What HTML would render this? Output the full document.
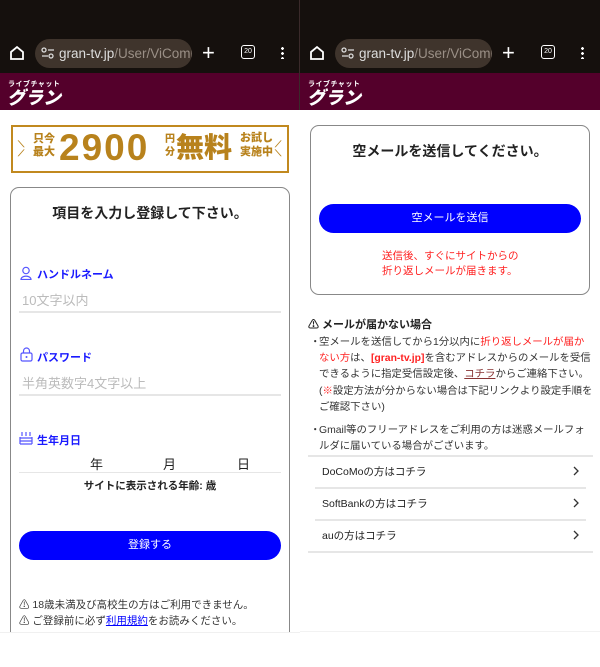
<!DOCTYPE html>
<html><head><meta charset="utf-8"><style>
*{box-sizing:border-box;margin:0;padding:0}
body{width:600px;height:667px;background:#fff;font-family:"Liberation Sans","Noto Sans CJK JP",sans-serif;position:relative;overflow:hidden;color:#222}
.p{position:absolute;top:0;width:300px;height:667px;overflow:hidden}
.top{position:absolute;left:0;top:0;width:300px;height:73px;background:#15100d}
.url{position:absolute;left:35px;top:39px;width:157px;height:29px;border-radius:15px;background:#3f342c;color:#ddd;font-size:13.5px;line-height:29px;padding-left:24px;white-space:nowrap;overflow:hidden}
.url span{color:#9a8f86}
.band{position:absolute;left:0;top:73px;width:300px;height:37px;background:#54002b}
.logo1{position:absolute;left:8px;top:79px;color:#fff;font-size:7px;font-weight:bold;letter-spacing:0.5px}
.logo2{position:absolute;left:7px;top:84px;color:#fff;font-size:18px;font-weight:900;font-style:italic}
.abs{position:absolute}
.lbl{color:#1a1aff;font-size:11px;font-weight:bold}
.ph{color:#bbb;font-size:13px}
.ln{position:absolute;height:2px;background:#e6e6e6}
.btn{position:absolute;background:#0000ff;color:#fff;border-radius:15px;text-align:center;font-size:11px;line-height:29px}
.bl{position:absolute;left:10px;font-size:10.4px;line-height:16.2px;color:#333;white-space:nowrap}
.bl i{font-style:normal;display:inline-block;width:9px}
</style></head><body>
<div class="p" style="left:0">
<div class="top"></div>
<svg class="abs" style="left:8px;top:44px" width="18" height="18" viewBox="0 0 18 18"><path d="M3 8L9 3L15 8V15H3Z" fill="none" stroke="#fff" stroke-width="1.8"/></svg>
<div class="url">gran-tv.jp<span>/User/ViComm</span></div>
<svg class="abs" style="left:41px;top:47px" width="14" height="12"><circle cx="3" cy="3" r="2" fill="none" stroke="#ddd" stroke-width="1.3"/><path d="M7 3H13M1 9H7" stroke="#ddd" stroke-width="1.3"/><circle cx="10" cy="9" r="2" fill="none" stroke="#ddd" stroke-width="1.3"/></svg>
<div class="abs" style="left:202px;top:42px;color:#fff;font-size:22px;line-height:22px">+</div>
<div class="abs" style="left:241px;top:45px;width:14px;height:14px;border:1.5px solid #fff;border-radius:3px;color:#fff;font-size:7px;text-align:center;line-height:11px">20</div>
<div class="abs" style="left:281px;top:46px;width:3px;height:13px;background:radial-gradient(circle,#fff 1.3px,transparent 1.5px) 0 0/3px 5px"></div>
<div class="band"></div>
<div class="logo1">ライブチャット</div><div class="logo2">グラン</div>
<div class="abs" style="left:11px;top:125px;width:278px;height:48px;border:2px solid #c1891f;color:#b8821c;font-weight:900">
<div class="abs" style="left:20px;top:6px;font-size:11px;line-height:13px">只今<br>最大</div>
<div class="abs" style="left:46px;top:1px;font-size:37px;line-height:40px;letter-spacing:2px">2900</div>
<div class="abs" style="left:152px;top:6px;font-size:10px;line-height:13px">円<br>分</div>
<div class="abs" style="left:163px;top:5px;font-size:28px;line-height:32px">無料</div>
<div class="abs" style="left:227px;top:4px;font-size:11px;line-height:14px">お試し<br>実施中</div>
<div class="abs" style="left:5px;top:13px;font-size:9px;line-height:9px">⟍<br>⟋</div><div class="abs" style="left:262px;top:13px;font-size:9px;line-height:9px">⟋<br>⟍</div>
</div>
<div class="abs" style="left:10px;top:187px;width:280px;height:460px;border:1.5px solid #888;border-radius:9px"></div>
<div class="abs" style="left:0;width:300px;top:203px;text-align:center;font-size:14px;font-weight:bold">項目を入力し登録して下さい。</div>
<svg class="abs" style="left:20px;top:266px" width="12" height="14"><circle cx="6" cy="4.5" r="3.2" fill="none" stroke="#55f" stroke-width="1.2"/><path d="M1 13.5C1 9 11 9 11 13.5Z" fill="none" stroke="#55f" stroke-width="1.2"/></svg>
<div class="abs lbl" style="left:37px;top:266px">ハンドルネーム</div>
<div class="abs ph" style="left:22px;top:290px">10文字以内</div>
<div class="ln" style="left:19px;top:311px;width:262px"></div>
<svg class="abs" style="left:20px;top:347px" width="13" height="15"><path d="M3.5 6V4A3 3 0 0 1 9.5 4V6" fill="none" stroke="#55f" stroke-width="1.2"/><rect x="1" y="6" width="11" height="8" rx="1.5" fill="none" stroke="#55f" stroke-width="1.2"/><circle cx="6.5" cy="10" r="1" fill="#55f"/></svg>
<div class="abs lbl" style="left:37px;top:349px">パスワード</div>
<div class="abs ph" style="left:22px;top:373px">半角英数字4文字以上</div>
<div class="ln" style="left:19px;top:394px;width:262px"></div>
<svg class="abs" style="left:19px;top:431px" width="14" height="14"><path d="M3 1V5M7 1V5M11 1V5M1 7H13M1 10H13M1 13H13" stroke="#55f" stroke-width="1.2"/><path d="M1 6V13M13 6V13" stroke="#55f" stroke-width="1.2"/></svg>
<div class="abs lbl" style="left:37px;top:432px">生年月日</div>
<div class="abs" style="left:90px;top:454px;font-size:13px">年</div>
<div class="abs" style="left:163px;top:454px;font-size:13px">月</div>
<div class="abs" style="left:237px;top:454px;font-size:13px">日</div>
<div class="ln" style="left:19px;top:472px;width:262px;height:1px"></div>
<div class="abs" style="left:0;width:300px;top:478px;text-align:center;font-size:10.5px;font-weight:bold">サイトに表示される年齢: 歳</div>
<div class="btn" style="left:19px;top:531px;width:262px">登録する</div>
<div class="abs" style="left:19px;top:597px;font-size:10.5px;line-height:16px;color:#333">⚠ 18歳未満及び高校生の方はご利用できません。<br>⚠ ご登録前に必ず<u style="color:#00f">利用規約</u>をお読みください。</div>
<div class="abs" style="left:0;top:632px;width:300px;height:35px;background:#fff;border-top:1px solid #f0f0f0"></div>
</div>
<div class="abs" style="left:299px;top:0;width:1px;height:110px;background:#3a2a2a"></div>
<div class="p" style="left:300px">
<div class="top"></div>
<svg class="abs" style="left:8px;top:44px" width="18" height="18" viewBox="0 0 18 18"><path d="M3 8L9 3L15 8V15H3Z" fill="none" stroke="#fff" stroke-width="1.8"/></svg>
<div class="url">gran-tv.jp<span>/User/ViComm</span></div>
<svg class="abs" style="left:41px;top:47px" width="14" height="12"><circle cx="3" cy="3" r="2" fill="none" stroke="#ddd" stroke-width="1.3"/><path d="M7 3H13M1 9H7" stroke="#ddd" stroke-width="1.3"/><circle cx="10" cy="9" r="2" fill="none" stroke="#ddd" stroke-width="1.3"/></svg>
<div class="abs" style="left:202px;top:42px;color:#fff;font-size:22px;line-height:22px">+</div>
<div class="abs" style="left:241px;top:45px;width:14px;height:14px;border:1.5px solid #fff;border-radius:3px;color:#fff;font-size:7px;text-align:center;line-height:11px">20</div>
<div class="abs" style="left:281px;top:46px;width:3px;height:13px;background:radial-gradient(circle,#fff 1.3px,transparent 1.5px) 0 0/3px 5px"></div>
<div class="band"></div>
<div class="logo1">ライブチャット</div><div class="logo2">グラン</div>
<div class="abs" style="left:10px;top:125px;width:280px;height:170px;border:1.5px solid #888;border-radius:9px"></div>
<div class="abs" style="left:0;width:300px;top:141px;text-align:center;font-size:14px;font-weight:bold">空メールを送信してください。</div>
<div class="btn" style="left:19px;top:204px;width:262px">空メールを送信</div>
<div class="abs" style="left:82px;top:249px;font-size:10.5px;line-height:15px;color:#f22">送信後、すぐにサイトからの<br>折り返しメールが届きます。</div>
<div class="abs" style="left:8px;top:316px;font-size:11px;font-weight:bold">⚠ メールが届かない場合</div>
<div class="bl" style="top:335px"><i>・</i>空メールを送信してから1分以内に<span style="color:#f22">折り返しメールが届か</span><br><i></i><span style="color:#f22">ない方</span>は、<b style="color:#f22">[gran-tv.jp]</b>を含むアドレスからのメールを受信<br><i></i>できるように指定受信設定後、<u style="color:#833">コチラ</u>からご連絡下さい。<br><i></i>(<span style="color:#f22">※</span>設定方法が分からない場合は下記リンクより設定手順を<br><i></i>ご確認下さい)</div>
<div class="bl" style="top:423px"><i>・</i>Gmail等のフリーアドレスをご利用の方は迷惑メールフォ<br><i></i>ルダに届いている場合がございます。</div>
<div class="ln" style="left:8px;top:455px;width:285px"></div>
<div class="abs" style="left:22px;top:464px;font-size:10.5px">DoCoMoの方はコチラ</div>
<div class="ln" style="left:15px;top:487px;width:271px"></div>
<div class="abs" style="left:22px;top:496px;font-size:10.5px">SoftBankの方はコチラ</div>
<div class="ln" style="left:15px;top:519px;width:271px"></div>
<div class="abs" style="left:22px;top:528px;font-size:10.5px">auの方はコチラ</div>
<div class="ln" style="left:8px;top:551px;width:285px"></div>
<svg class="abs" style="left:272px;top:466px" width="8" height="80"><path d="M2 1L6 5L2 9M2 33L6 37L2 41M2 65L6 69L2 73" fill="none" stroke="#333" stroke-width="1.3"/></svg>
<div class="abs" style="left:0;top:631px;width:300px;height:1px;background:#f2f2f2"></div>
</div>
</body></html>
